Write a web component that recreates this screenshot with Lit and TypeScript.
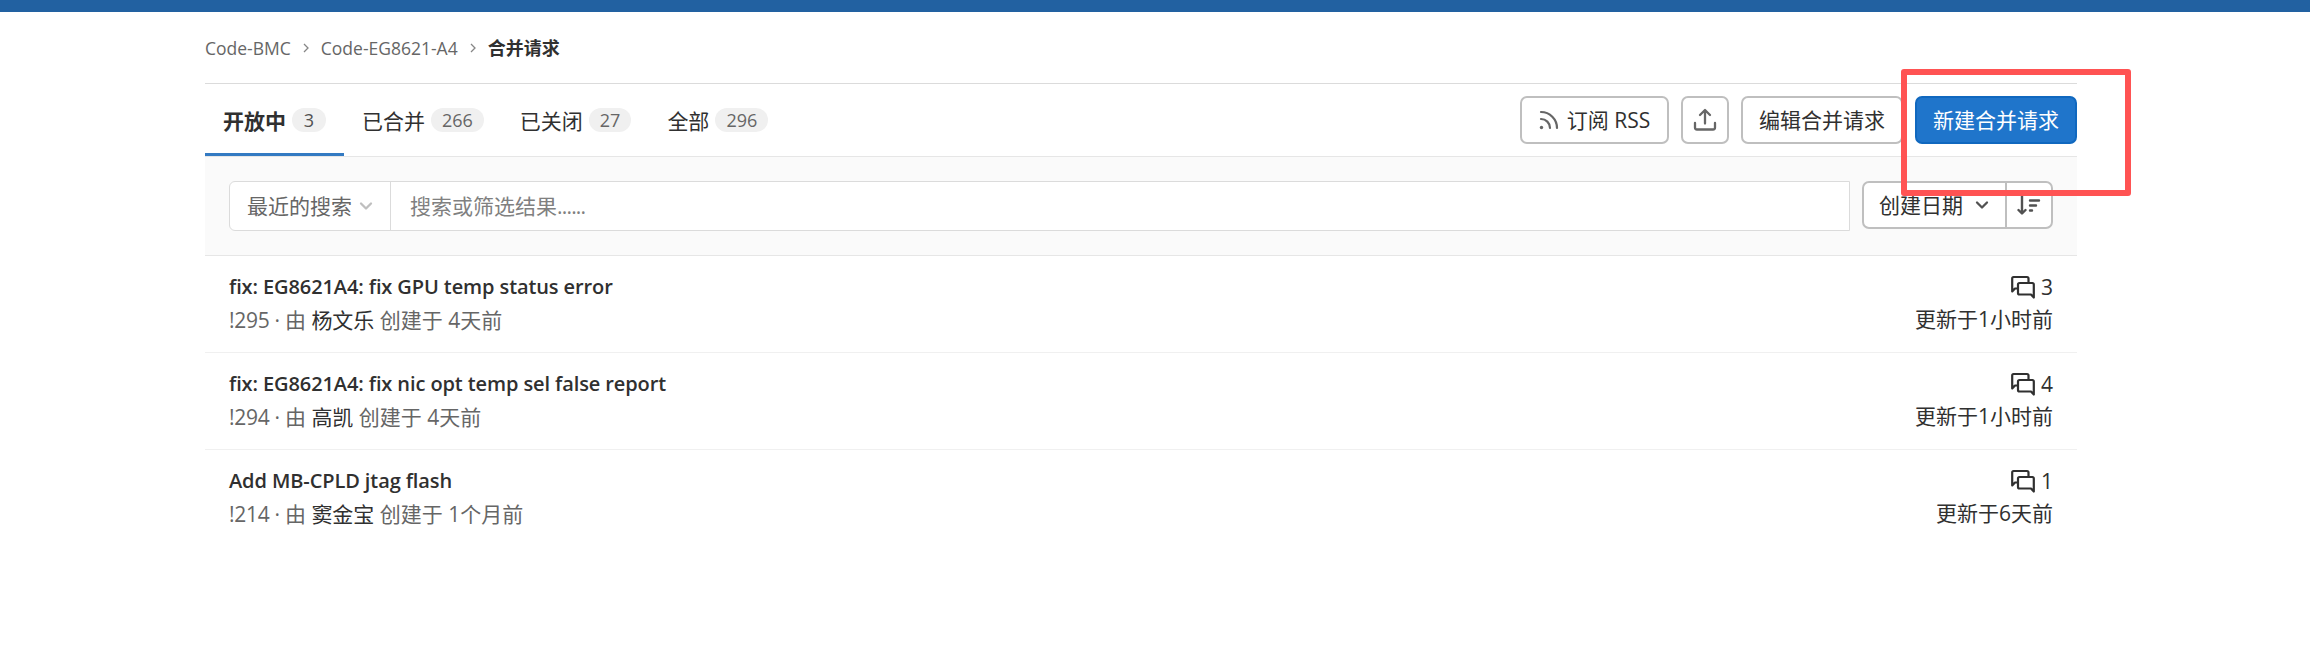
import { LitElement, html, css } from 'lit';
import { customElement } from 'lit/decorators.js';

const tabs = [
  { label: '开放中', count: 3, cls: 'tab active' },
  { label: '已合并', count: 266, cls: 'tab' },
  { label: '已关闭', count: 27, cls: 'tab' },
  { label: '全部', count: 296, cls: 'tab' },
];

const requests = [
  { title: 'fix: EG8621A4: fix GPU temp status error', id: '!295', author: '杨文乐', created: '4天前', comments: 3, updated: '1小时前' },
  { title: 'fix: EG8621A4: fix nic opt temp sel false report', id: '!294', author: '高凯', created: '4天前', comments: 4, updated: '1小时前' },
  { title: 'Add MB-CPLD jtag flash', id: '!214', author: '窦金宝', created: '1个月前', comments: 1, updated: '6天前' },
];

const chevron = html`<svg width="24" height="24" viewBox="0 0 24 24"><path d="M7 9.500l5 5 5-5" fill="none" stroke="currentColor" stroke-width="2.3" stroke-linecap="round" stroke-linejoin="round"/></svg>`;
const crumbArrow = html`<svg class="sep" width="12" height="12" viewBox="0 0 12 12"><path d="M4 2l4 4-4 4" fill="none" stroke="currentColor" stroke-width="1.3"/></svg>`;

@customElement('app-root')
export class AppRoot extends LitElement {
  static styles = css`
    :host { display: block; height: 668px; overflow: hidden; position: relative; background: #fff; color: #303030;
      font: 390 21px/30px "Open Sans", "Noto Sans CJK SC", sans-serif; }
    * { box-sizing: border-box; }
    svg { display: block; flex: none; }
    .topbar { height: 12px; background: #2261a1; }
    .page { margin: 0 233px 0 205px; }
    .crumbs { height: 72px; border-bottom: 1px solid #dbdbdb; display: flex; align-items: center; font-size: 17.5px; font-weight: 400; color: #666; white-space: nowrap; }
    .crumbs b { color: #303030; font-size: 18px; }
    .sep { margin: 0 9px; color: #868686; }
    .nav { height: 73px; border-bottom: 1px solid #e6e6e6; display: flex; justify-content: space-between; }
    .tabs, .actions { display: flex; }
    .tab { display: flex; align-items: flex-start; padding: 24px 18px 0; gap: 6px; white-space: nowrap; }
    .label { line-height: 26px; }
    .active { font-weight: 700; border-bottom: 3px solid #337ac2; }
    .count { height: 24px; border-radius: 12px; background: #f0f0f0; color: #666; font-size: 18px; line-height: 24px; padding: 0 11px; font-weight: 400; }
    .active .count { font-weight: 500; padding: 0 11.8px; color: #525252; }
    .actions { gap: 12px; padding-top: 12px; }
    .btn { height: 48px; border: 2px solid #bfbfbf; border-radius: 7px; background: #fff; display: flex; align-items: center; justify-content: center; white-space: nowrap; }
    .rss { width: 149px; gap: 8px; }
    .icon { color: #666; }
    .up { width: 48px; }
    .edit { width: 162px; }
    .new { width: 162px; background: #1f75cb; border-color: #1068bf; color: #fff; }
    .filter { height: 99px; background: #fafafa; border-bottom: 1px solid #e6e6e6; padding: 24px 24px 0; display: flex; gap: 12px; }
    .search { flex: 1; height: 50px; border: 1px solid #dbdbdb; border-radius: 6px 0 0 6px; background: #fff; display: flex; }
    .recent { width: 161px; border-right: 1px solid #dbdbdb; display: flex; align-items: center; padding-left: 17px; gap: 2px; color: #666; white-space: nowrap; }
    .recent svg { color: #bfbfbf; }
    .ph { padding-left: 19px; line-height: 49px; color: #808080; }
    .dots { letter-spacing: -0.8px; }
    .sort { width: 191px; display: flex; }
    .by { width: 145px; border-radius: 7px 0 0 7px; gap: 7px; justify-content: flex-start; padding-left: 15px; }
    .by svg { color: #525252; }
    .dir { width: 48px; margin-left: -2px; border-radius: 0 7px 7px 0; color: #525252; }
    .row { height: 97px; border-bottom: 1px solid #f0f0f0; padding: 16px 24px 0; display: flex; justify-content: space-between; white-space: nowrap; }
    .row:last-child { border-bottom: 0; }
    .title { font-weight: 560; font-size: 20px; letter-spacing: -0.1px; height: 33px; }
    .meta { color: #666; height: 30px; }
    .id { letter-spacing: -0.3px; }
    .author { color: #303030; }
    .right { display: flex; flex-direction: column; align-items: flex-end; }
    .comments { height: 32px; display: flex; align-items: flex-start; gap: 6px; }
    .comments svg { margin-top: 3px; }
    .mark { position: absolute; left: 1901px; top: 69px; width: 230px; height: 127px; border: 6px solid #ff5353; border-radius: 3px; }
  `;

  render() {
    return html`
      <div class="topbar"></div>
      <div class="page">
        <div class="crumbs"><span>Code-BMC</span>${crumbArrow}<span>Code-EG8621-A4</span>${crumbArrow}<b>合并请求</b></div>
        <div class="nav">
          <div class="tabs">${tabs.map(t => html`<div class=${t.cls}><span class="label">${t.label}</span><span class="count">${t.count}</span></div>`)}</div>
          <div class="actions">
            <div class="btn rss"><svg class="icon" width="20" height="20" viewBox="0 0 20 20"><g fill="none" stroke="currentColor" stroke-width="2.2" stroke-linecap="round"><path d="M2 2A16 16 0 0 1 18 18"/><path d="M2 9A9 9 0 0 1 11 18"/></g><circle cx="2.500" cy="17.500" r="1.700" fill="currentColor"/></svg><span>订阅 RSS</span></div>
            <div class="btn up"><svg class="icon" width="24" height="24" viewBox="0 0 24 24"><path d="M12 15.500V2.500M7 7l5-5 5 5M2 15v4.500q0 2 2 2h16q2 0 2-2V15" fill="none" stroke="currentColor" stroke-width="2.300" stroke-linecap="round" stroke-linejoin="round"/></svg></div>
            <div class="btn edit"><span>编辑合并请求</span></div>
            <div class="btn new"><span>新建合并请求</span></div>
          </div>
        </div>
        <div class="filter">
          <div class="search"><div class="recent"><span>最近的搜索</span>${chevron}</div><div class="ph">搜索或筛选结果<span class="dots">......</span></div></div>
          <div class="sort">
            <div class="btn by"><span>创建日期</span>${chevron}</div>
            <div class="btn dir"><svg width="24" height="24" viewBox="0 0 24 24"><path d="M5 3v17M1.500 17L5 20.500l3.500-3.500M13 7.500h9M13 12.500h6M13 17.500h2" fill="none" stroke="currentColor" stroke-width="2.400" stroke-linecap="round" stroke-linejoin="round"/></svg></div>
          </div>
        </div>
        <div>${requests.map(r => html`<div class="row">
          <div><div class="title">${r.title}</div><div class="meta"><span class="id">${r.id} · </span>由 <span class="author">${r.author}</span> 创建于 ${r.created}</div></div>
          <div class="right"><div class="comments"><svg width="24" height="24" viewBox="0 0 24 24"><g fill="none" stroke="currentColor" stroke-width="2.200" stroke-linejoin="round"><path d="M17.500 7V3.500Q17.500 2 16 2H2.500Q1.200 2 1.200 3.500V16.500L4 13.500H7"/><path d="M22.800 22.500V9.500Q22.800 8 21.300 8H8.500Q7 8 7 9.500V18Q7 19.500 8.500 19.500H20Z"/></g></svg><span>${r.comments}</span></div><div>更新于${r.updated}</div></div>
        </div>`)}</div>
      </div>
      <div class="mark"></div>
    `;
  }
}
